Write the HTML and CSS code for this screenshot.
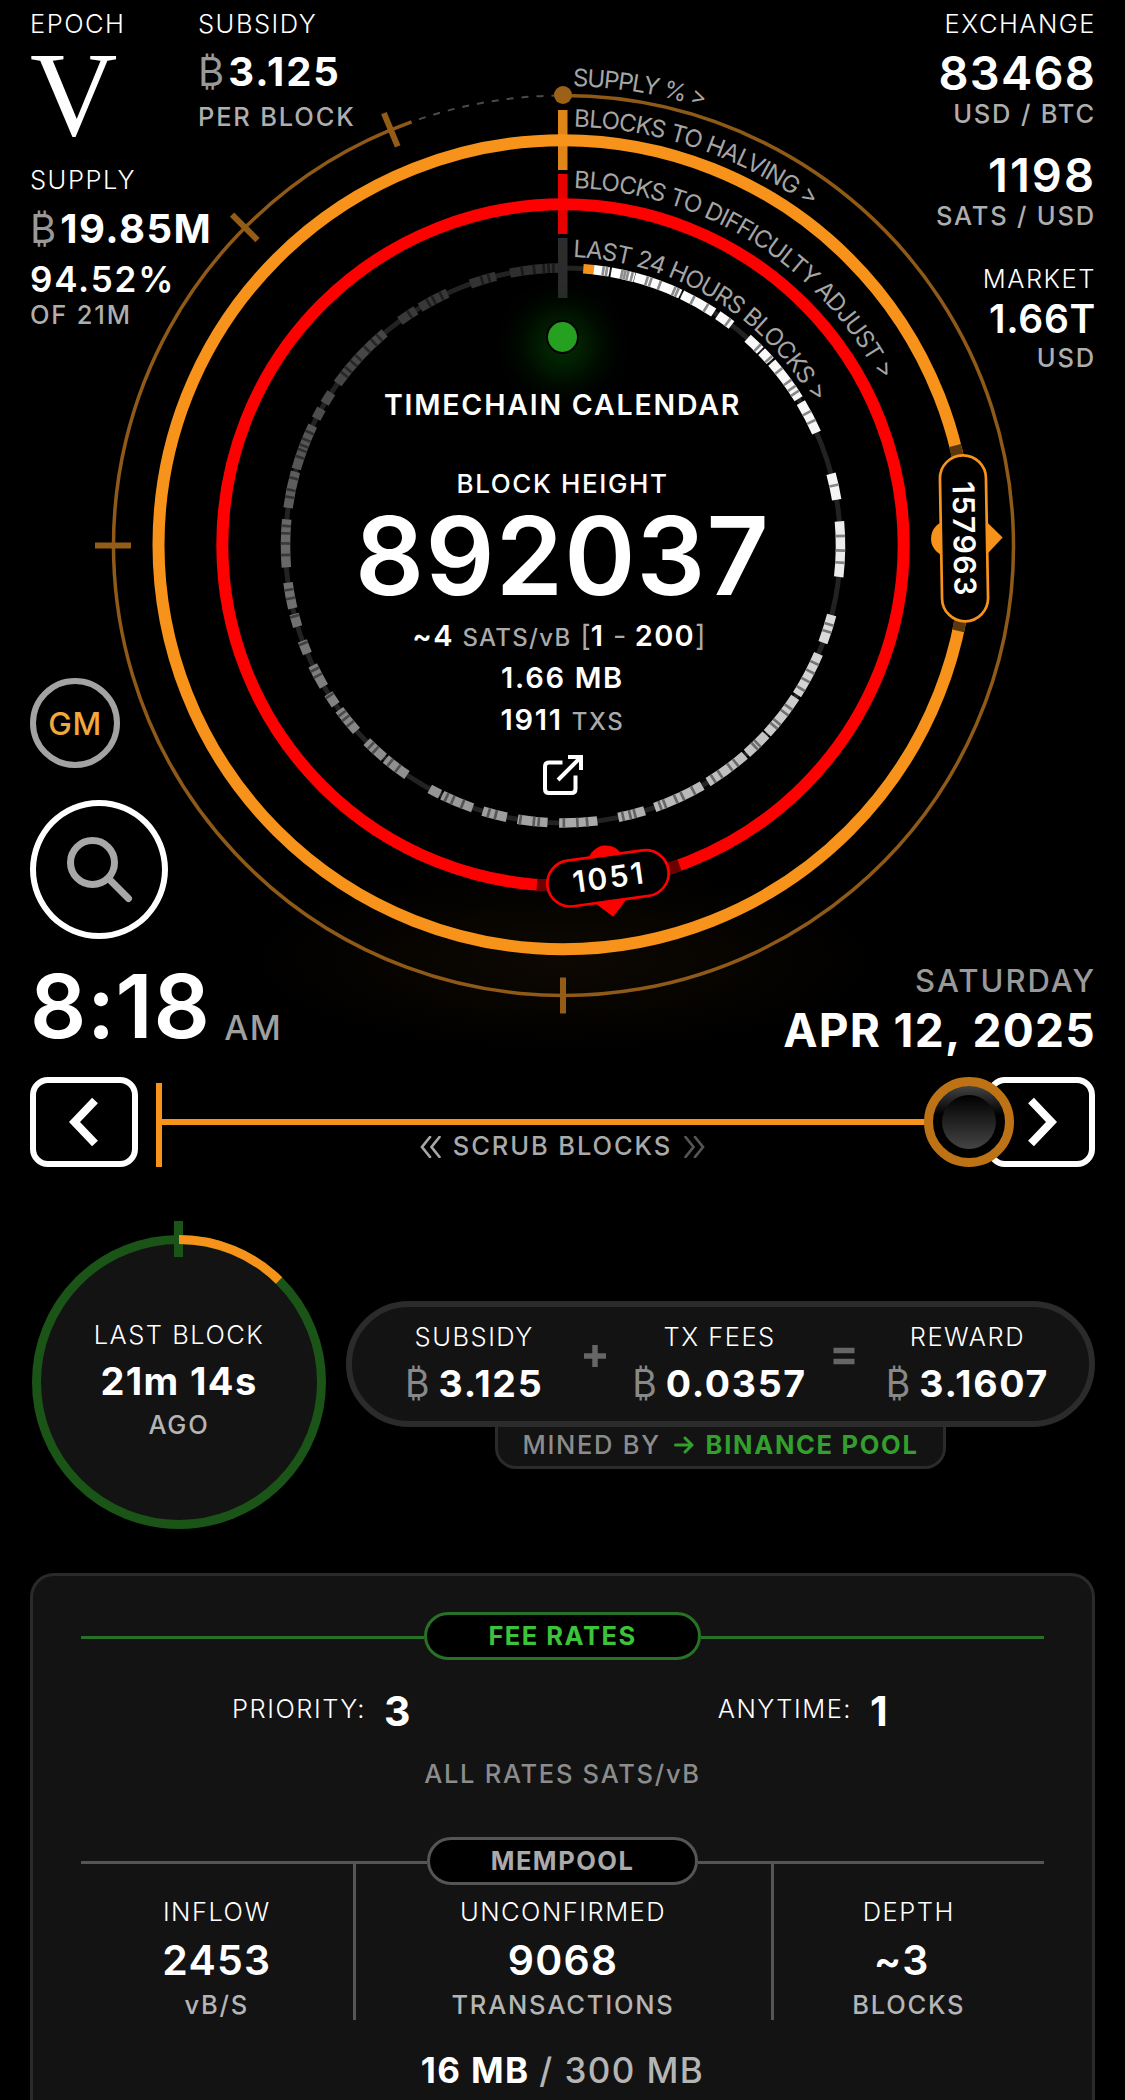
FILE: index.html
```html
<!DOCTYPE html>
<html lang="en">
<head>
    <meta charset="UTF-8">
    <meta name="viewport" content="width=device-width, initial-scale=1.0">
    <title>Timechain Calendar</title>
    <link rel="stylesheet" href="styles.css">
</head>
<body>

    <!-- Dial and corner stats -->
    <section class="hero">
        <svg class="dial" viewBox="0 0 1125 1056">
            <defs>
                <radialGradient id="floor-glow">
                    <stop offset="0" stop-color="#f7931a" stop-opacity="0.055"/>
                    <stop offset="1" stop-color="#f7931a" stop-opacity="0"/>
                </radialGradient>
                <path id="path-supply" d="M563 86 A459 459 0 0 1 1022 545"/>
                <path id="path-halving" d="M563 126.5 A418.5 418.5 0 0 1 981.5 545"/>
                <path id="path-difficulty" d="M563 188 A357 357 0 0 1 920 545"/>
                <path id="path-day" d="M563 257 A288 288 0 0 1 851 545"/>
            </defs>
            <ellipse cx="563" cy="960" rx="330" ry="95" fill="url(#floor-glow)"/>

            <!-- Supply ring -->
            <path class="ring supply" id="supply-arc"/>
            <g id="supply-ticks"></g>
            <circle cx="563" cy="95" r="9" fill="#9c6016"/>

            <!-- Halving ring -->
            <rect x="558" y="110" width="9.5" height="60" fill="#e08618"/>
            <circle class="ring halving" cx="563" cy="544.7" r="404.5"/>
            <path class="ring stub-halving" id="halving-stub"/>

            <!-- Difficulty ring -->
            <rect x="558" y="174" width="9.5" height="60" fill="#e60000"/>
            <circle class="ring difficulty" cx="563" cy="545" r="340.7"/>
            <path class="ring stub-difficulty" id="difficulty-stub"/>

            <!-- Last 24 hours ring -->
            <circle class="ring day" cx="563" cy="545.5" r="277.5"/>
            <g id="day-blocks"></g>
            <rect x="558" y="238" width="9.5" height="60" fill="#2c2c2c"/>

            <g class="ring-label">
                <text textLength="133"><textPath href="#path-supply" startOffset="10" textLength="133">SUPPLY % &gt;</textPath></text>
                <text textLength="254"><textPath href="#path-halving" startOffset="11" textLength="254">BLOCKS TO HALVING &gt;</textPath></text>
                <text textLength="379"><textPath href="#path-difficulty" startOffset="11" textLength="379">BLOCKS TO DIFFICULTY ADJUST &gt;</textPath></text>
                <text textLength="294"><textPath href="#path-day" startOffset="10" textLength="294">LAST 24 HOURS BLOCKS &gt;</textPath></text>
            </g>

            <g class="marker marker-halving" transform="translate(964 538.3) rotate(89)">
                <circle cy="15" r="18"/>
                <path d="M-19 -20 L0 -38.7 L19 -20 Z"/>
                <rect x="-83" y="-23" width="166" height="46" rx="23"/>
                <text y="10.5" textLength="114">157963</text>
            </g>
            <g class="marker marker-difficulty" transform="translate(608 878.3) rotate(-7.8)">
                <circle cy="-15" r="18"/>
                <path d="M-19 20 L0 38.7 L19 20 Z"/>
                <rect x="-61" y="-23" width="122" height="46" rx="23"/>
                <text y="10" textLength="71">1051</text>
            </g>
        </svg>

        <div class="block">
            <div class="status-dot"></div>
            <h1>TIMECHAIN CALENDAR</h1>
            <h2>BLOCK HEIGHT</h2>
            <p class="height">892037</p>
            <p class="detail fee-range">~4 <small>SATS/vB</small> <i>[</i>1 <i>-</i> 200<i>]</i></p>
            <p class="detail">1.66 MB</p>
            <p class="detail">1911 <small>TXS</small></p>
            <svg class="icon-open" viewBox="0 0 40 40">
                <path d="M19.5 7.500 H6 Q2 7.500 2 11.500 V34 Q2 38 6 38 H28.500 Q32.500 38 32.500 34 V20.500"/>
                <path d="M15 25 L37.500 2.500 M25 2 H38 V15"/>
            </svg>
        </div>

        <div class="overlay">
            <div class="corners">
                <div class="left">
                    <div class="pair">
                        <div class="epoch">
                            <p class="label">EPOCH</p>
                            <p class="numeral">V</p>
                        </div>
                        <div class="subsidy">
                            <p class="label">SUBSIDY</p>
                            <p class="value"><span class="btc">₿</span>3.125</p>
                            <p class="unit">PER BLOCK</p>
                        </div>
                    </div>
                    <div class="supply-stats">
                        <p class="label">SUPPLY</p>
                        <p class="value"><span class="btc">₿</span>19.85M</p>
                        <p class="percent">94.52%</p>
                        <p class="unit">OF 21M</p>
                    </div>
                </div>
                <div class="right">
                    <p class="label">EXCHANGE</p>
                    <p class="price">83468</p>
                    <p class="unit">USD / BTC</p>
                    <p class="price sats">1198</p>
                    <p class="unit">SATS / USD</p>
                    <p class="label market">MARKET</p>
                    <p class="cap">1.66T</p>
                    <p class="unit">USD</p>
                </div>
            </div>

            <div class="corners bottom">
                <div class="actions">
                    <button class="gm-btn">GM</button>
                    <button class="search-btn">
                        <svg viewBox="0 0 66 66">
                            <circle cx="25.500" cy="25.500" r="22"/>
                            <path d="M42 42 L61.500 61.500"/>
                        </svg>
                    </button>
                    <p class="time">8:18<span>AM</span></p>
                </div>
                <div class="date">
                    <p class="weekday">SATURDAY</p>
                    <p class="day-text">APR 12, 2025</p>
                </div>
            </div>
        </div>
    </section>

    <!-- Scrubber -->
    <section class="scrubber">
        <button class="step-btn">
            <svg viewBox="0 0 30 50"><path d="M26 3.500 L5.500 25 L26 46.500"/></svg>
        </button>
        <div class="track">
            <div class="track-line"></div>
            <p class="track-label">
                <svg viewBox="0 0 22 22"><path d="M10 1 L2 11 L10 21 M19.500 1 L11.500 11 L19.500 21"/></svg>
                <span>SCRUB BLOCKS</span>
                <svg class="dim" viewBox="0 0 22 22"><path d="M2.500 1 L10.500 11 L2.500 21 M12 1 L20 11 L12 21"/></svg>
            </p>
            <div class="knob"><div class="knob-inner"></div></div>
        </div>
        <button class="step-btn next">
            <svg viewBox="0 0 30 50"><path d="M4 3.500 L24.500 25 L4 46.500"/></svg>
        </button>
    </section>

    <!-- Last block and reward -->
    <section class="summary">
        <div class="last-block">
            <svg class="last-ring" viewBox="0 0 294 324">
                <circle cx="147" cy="177" r="142.500" fill="#131313" stroke="#1a5416" stroke-width="9"/>
                <rect x="142" y="16" width="9" height="36" fill="#1a5416"/>
                <path d="M147 34.500 A142.500 142.500 0 0 1 247.100 75.500" fill="none" stroke="#f7931a" stroke-width="9"/>
            </svg>
            <p class="label">LAST BLOCK</p>
            <p class="ago">21m 14s</p>
            <p class="unit">AGO</p>
        </div>
        <div class="reward">
            <div class="reward-pill">
                <div class="amount">
                    <p class="label">SUBSIDY</p>
                    <p class="sum"><span class="btc">₿</span>3.125</p>
                </div>
                <svg class="sign plus" viewBox="0 0 22 22"><path d="M11 0 V22 M0 11 H22"/></svg>
                <div class="amount">
                    <p class="label">TX FEES</p>
                    <p class="sum"><span class="btc">₿</span>0.0357</p>
                </div>
                <svg class="sign" viewBox="0 0 22 22"><path d="M0.500 5.500 H21.500 M0.500 16.500 H21.500"/></svg>
                <div class="amount">
                    <p class="label">REWARD</p>
                    <p class="sum"><span class="btc">₿</span>3.1607</p>
                </div>
            </div>
            <div class="mined">
                <span>MINED BY</span>
                <svg viewBox="0 0 20 18"><path d="M1.500 9 H18 M11 2 L18 9 L11 16"/></svg>
                <a href="#">BINANCE POOL</a>
            </div>
        </div>
    </section>

    <!-- Fees and mempool -->
    <section class="card">
        <div class="heading fees"><h3>FEE RATES</h3></div>
        <div class="rates">
            <p><span class="label">PRIORITY:</span><b>3</b></p>
            <p><span class="label">ANYTIME:</span><b>1</b></p>
        </div>
        <p class="note">ALL RATES SATS/vB</p>
        <div class="heading mempool"><h3>MEMPOOL</h3></div>
        <div class="columns">
            <div>
                <p class="label">INFLOW</p>
                <p class="count">2453</p>
                <p class="unit">vB/S</p>
            </div>
            <div>
                <p class="label">UNCONFIRMED</p>
                <p class="count">9068</p>
                <p class="unit">TRANSACTIONS</p>
            </div>
            <div>
                <p class="label">DEPTH</p>
                <p class="count depth">~3</p>
                <p class="unit">BLOCKS</p>
            </div>
        </div>
        <p class="memory">16 MB <span>/ 300 MB</span></p>
    </section>

    <script src="dial.js"></script>
</body>
</html>
```
FILE: styles.css
```css
* {
    margin: 0;
    padding: 0;
    box-sizing: border-box;
    font-family: Inter, "Liberation Sans", sans-serif;
}

body {
    background-color: #000;
    color: white;
    width: 1125px;
    height: 2100px;
    overflow: hidden;
}

button {
    background: none;
    cursor: pointer;
}

.label {
    font-size: 25.5px;
    font-weight: 300;
    line-height: 31px;
    letter-spacing: 1.5px;
}

.unit {
    font-size: 25.5px;
    font-weight: 500;
    line-height: 31px;
    letter-spacing: 1.8px;
    color: #aeaeae;
}

.btc {
    margin-right: 4px;
    font-weight: 400;
    letter-spacing: 0;
    color: #999;
}

/* Dial */
.hero {
    display: grid;
    height: 1056px;
}

.hero > * {
    grid-area: 1 / 1;
}

.dial {
    width: 1125px;
    height: 1056px;
}

.ring {
    fill: none;
}

.supply {
    stroke: #8f5a17;
    stroke-width: 3.5;
}

.supply-remaining {
    fill: none;
    stroke: #4a4a4a;
    stroke-width: 2;
    stroke-dasharray: 7 8;
}

.supply-tick {
    stroke: #935c17;
    stroke-width: 6;
}

.halving {
    stroke: #f7931a;
    stroke-width: 12;
}

.stub-halving {
    stroke: #5a370d;
    stroke-width: 12;
}

.difficulty {
    stroke: #f00;
    stroke-width: 12;
}

.stub-difficulty {
    stroke: #6b0000;
    stroke-width: 12;
}

.day {
    stroke: #222;
    stroke-width: 5;
}

.ring-label text {
    font-size: 24px;
    font-weight: 400;
    fill: #a5a5a5;
}

.marker rect {
    fill: #000;
    stroke-width: 2.7;
}

.marker text {
    font-size: 30px;
    font-weight: 600;
    text-anchor: middle;
    fill: white;
}

.marker-halving {
    fill: #f7931a;
}

.marker-halving rect {
    stroke: #f7931a;
}

.marker-difficulty {
    fill: #f00;
}

.marker-difficulty rect {
    stroke: #f00;
}

/* Block info in the middle of the dial */
.block {
    display: flex;
    flex-direction: column;
    align-items: center;
    padding-top: 322px;
}

.status-dot {
    width: 29px;
    height: 30px;
    border-radius: 50%;
    background-color: #26a021;
    box-shadow: 0 0 0 2px #000, 0 8px 36px 18px #033003;
}

.block h1 {
    margin-top: 35px;
    font-size: 28.5px;
    font-weight: 600;
    line-height: 36px;
    letter-spacing: 1.8px;
}

.block h2 {
    margin-top: 45px;
    font-size: 26px;
    font-weight: 500;
    line-height: 31px;
    letter-spacing: 1.6px;
}

.height {
    margin-top: 1px;
    font-size: 108px;
    font-weight: 600;
    line-height: 112px;
    letter-spacing: 1.2px;
}

.detail {
    font-size: 29px;
    font-weight: 600;
    line-height: 42px;
    letter-spacing: 1.7px;
}

.fee-range {
    margin-top: 3px;
    padding-right: 7px;
    letter-spacing: 1.3px;
}

.detail small {
    font-size: 24px;
    font-weight: 500;
    line-height: 1;
    color: #aaa;
}

.detail i {
    font-style: normal;
    font-weight: 400;
    letter-spacing: 0;
    color: #aaa;
}

.icon-open {
    margin-top: 14px;
    width: 40px;
    height: 40px;
    fill: none;
    stroke: white;
    stroke-width: 4;
}

/* Corner stats */
.overlay {
    display: flex;
    flex-direction: column;
    justify-content: space-between;
    padding: 8px 30px 0;
}

.corners {
    display: flex;
    justify-content: space-between;
}

.pair {
    display: flex;
    height: 156px;
}

.epoch {
    width: 168px;
}

.numeral {
    font-family: "Liberation Serif", serif;
    font-size: 121px;
    line-height: 111px;
}

.subsidy .value {
    margin-top: 8px;
    letter-spacing: 2px;
}

.subsidy .unit {
    margin-top: 4px;
}

.value {
    margin-top: 9px;
    font-size: 40px;
    font-weight: 700;
    line-height: 50px;
    letter-spacing: 1.5px;
}

.percent {
    margin-top: 5px;
    font-size: 35px;
    font-weight: 600;
    line-height: 40px;
    letter-spacing: 1.8px;
}

.right {
    margin-right: -1px;
    text-align: right;
}

.price {
    margin-top: 9px;
    font-size: 47px;
    font-weight: 600;
    line-height: 50px;
    letter-spacing: 1.2px;
}

.price.sats {
    margin-top: 21px;
    letter-spacing: 2px;
}

.market {
    margin-top: 32px;
}

.cap {
    margin-top: 2px;
    font-size: 39px;
    font-weight: 600;
    line-height: 46px;
    letter-spacing: 0.7px;
}

.bottom {
    align-items: flex-end;
}

.gm-btn {
    display: block;
    width: 90px;
    height: 90px;
    border: 6px solid #a3a3a3;
    border-radius: 50%;
    font-size: 31.5px;
    font-weight: 500;
    letter-spacing: 0.5px;
    color: #f2a93b;
}

.search-btn {
    display: flex;
    width: 138px;
    height: 139px;
    margin: 32px 0 22px;
    padding: 31px;
    border: 6px solid white;
    border-radius: 50%;
}

.search-btn svg {
    width: 66px;
    height: 66px;
    flex: none;
    fill: none;
    stroke: #a8a8a8;
    stroke-width: 7;
    stroke-linecap: round;
}

.time {
    margin-bottom: 5px;
    font-size: 88px;
    font-weight: 600;
    line-height: 90px;
    letter-spacing: 0.6px;
}

.time span {
    position: relative;
    top: 2px;
    margin-left: 14px;
    font-size: 34px;
    font-weight: 500;
    line-height: 1;
    letter-spacing: 1.2px;
    color: #a0a0a0;
}

.date {
    margin-right: -1px;
    text-align: right;
}

.weekday {
    font-size: 31px;
    font-weight: 500;
    line-height: 36px;
    letter-spacing: 2px;
    color: #999;
}

.day-text {
    margin-top: 5px;
    font-size: 46px;
    font-weight: 700;
    line-height: 52px;
    letter-spacing: 1.3px;
}

/* Scrubber */
.scrubber {
    display: flex;
    margin: 21px 30px 0;
    height: 90px;
}

.step-btn {
    width: 108px;
    height: 90px;
    border: 6px solid white;
    border-radius: 18px;
}

.step-btn svg {
    width: 30px;
    height: 50px;
    margin-top: 2px;
    fill: none;
    stroke: white;
    stroke-width: 8;
}

.step-btn.next {
    padding-left: 2px;
}

.track {
    position: relative;
    flex: 1;
    margin: 6px 0 0 18px;
    border-left: 6px solid #f7931a;
}

.track-line {
    height: 6px;
    margin-top: 36px;
    background-color: #f7931a;
}

.track-label {
    display: flex;
    justify-content: center;
    align-items: center;
    gap: 11px;
    margin-top: 5px;
    padding-right: 24px;
    font-size: 25.5px;
    font-weight: 500;
    line-height: 31px;
    letter-spacing: 1.9px;
    color: #aaa;
}

.track-label svg {
    width: 22px;
    height: 22px;
    margin-top: 3px;
    fill: none;
    stroke: #a6a6a6;
    stroke-width: 2.7;
    stroke-linecap: round;
}

.track-label .dim {
    stroke: #555;
}

.knob {
    position: absolute;
    top: -6px;
    right: -27px;
    width: 90px;
    height: 90px;
    padding: 9px;
    border: 9px solid #bd7315;
    border-radius: 50%;
    background: linear-gradient(#444, #000 40%);
}

.knob-inner {
    height: 54px;
    border-radius: 50%;
    background: linear-gradient(#000, #444);
}

/* Last block and reward */
.summary {
    display: flex;
    margin: 53px 30px 0 32px;
    height: 309px;
}

.last-block {
    position: relative;
    width: 294px;
    padding-top: 99px;
    text-align: center;
}

.last-block > p {
    position: relative;
}

.last-ring {
    position: absolute;
    left: 0;
    top: -15px;
    width: 294px;
    height: 324px;
}

.ago {
    margin: 9px 0 6px;
    font-size: 38px;
    font-weight: 700;
    line-height: 44px;
    letter-spacing: 1.4px;
}

.last-block .unit {
    color: #b5b5b5;
}

.reward {
    margin: 81px 0 0 20px;
    flex: 1;
}

.reward-pill {
    display: flex;
    justify-content: space-between;
    height: 126px;
    padding: 14px 40px 0 53px;
    border: 6px solid #2b2b2b;
    border-radius: 63px;
    background-color: #131313;
    text-align: center;
}

.sum {
    margin-top: 10px;
    font-size: 37.5px;
    font-weight: 700;
    line-height: 44px;
    letter-spacing: 1.7px;
}

.sum .btc {
    margin-right: 9px;
    color: #888;
}

.sign {
    width: 22px;
    height: 22px;
    margin-top: 24px;
    margin-right: 4px;
    stroke: #666;
    stroke-width: 5.5;
}

.plus {
    margin-left: 14px;
    margin-right: 0;
}

.mined {
    display: flex;
    align-items: center;
    justify-content: center;
    width: 451px;
    height: 42px;
    margin: 0 auto;
    padding-bottom: 4px;
    border: 3px solid #2b2b2b;
    border-top: none;
    border-radius: 0 0 21px 21px;
    background-color: #131313;
    font-size: 25.5px;
    font-weight: 500;
    line-height: 36px;
    letter-spacing: 1.7px;
    color: #8c8c8c;
}

.mined svg {
    width: 20px;
    height: 18px;
    margin: 0 12px 0 13px;
    fill: none;
    stroke: #339f2d;
    stroke-width: 3;
    stroke-linecap: round;
}

.mined a {
    font-weight: 700;
    color: #339f2d;
    text-decoration: none;
}

/* Fees and mempool */
.card {
    height: 527px;
    margin: 44px 30px 0;
    padding: 36px 48px 0;
    border: 3px solid #2a2a2a;
    border-bottom: none;
    border-radius: 24px 24px 0 0;
    background-color: #131313;
}

.heading {
    display: flex;
    align-items: center;
    color: #aaa;
}

.heading::before,
.heading::after {
    content: "";
    flex: 1;
    height: 3px;
    margin-top: 2px;
    background-color: #555;
}

.heading h3 {
    width: 271px;
    height: 48px;
    border: 3px solid #555;
    border-radius: 24px;
    background-color: #000;
    font-size: 25.5px;
    font-weight: 700;
    line-height: 42px;
    letter-spacing: 1.5px;
    text-align: center;
}

.fees {
    color: #3dc33a;
}

.fees::before,
.fees::after {
    background-color: #277226;
}

.fees h3 {
    width: 277px;
    border-color: #277226;
}

.rates {
    display: flex;
    margin-top: 29px;
    height: 44px;
}

.rates p {
    display: flex;
    justify-content: center;
    width: 50%;
    gap: 18px;
    padding-right: 1px;
    line-height: 44px;
}

.rates .label {
    line-height: 39px;
}

.rates b {
    font-size: 41px;
    font-weight: 700;
}

.note {
    margin-top: 25px;
    font-size: 25.5px;
    font-weight: 500;
    line-height: 31px;
    letter-spacing: 1.7px;
    text-align: center;
    color: #8c8c8c;
}

.mempool {
    margin-top: 48px;
}

.columns {
    display: grid;
    grid-template-columns: 274.5px 418px 1fr;
    height: 158px;
    margin-top: -24px;
    text-align: center;
}

.columns div {
    padding-top: 35px;
    border-right: 3px solid #555;
}

.columns div:last-child {
    border-right: none;
}

.columns .count {
    margin: 11px 0 6px;
    font-size: 41px;
    font-weight: 600;
    line-height: 45px;
    letter-spacing: 1.2px;
}

.columns .depth {
    padding-right: 14px;
}

.columns .unit {
    color: #b5b5b5;
}

.memory {
    margin-top: 29px;
    font-size: 35px;
    font-weight: 650;
    line-height: 44px;
    letter-spacing: 1.4px;
    text-align: center;
}

.memory span {
    font-weight: 500;
    color: #b5b5b5;
}
```
FILE: dial.js
```js
const NS = 'http://www.w3.org/2000/svg';

// Angles run clockwise from the top of the dial
function point(cx, cy, r, deg) {
    const a = (deg - 90) * Math.PI / 180;
    return (cx + r * Math.cos(a)).toFixed(2) + ' ' + (cy + r * Math.sin(a)).toFixed(2);
}

function arc(cx, cy, r, from, to) {
    const large = to - from > 180 ? 1 : 0;
    return `M${point(cx, cy, r, from)} A${r} ${r} 0 ${large} 1 ${point(cx, cy, r, to)}`;
}

function addPath(parent, d, attrs) {
    const p = document.createElementNS(NS, 'path');
    p.setAttribute('d', d);
    for (const key in attrs) p.setAttribute(key, attrs[key]);
    parent.appendChild(p);
}

// Mined supply and what is left
const supplyEnd = 94.52 * 3.6;
const ticks = document.getElementById('supply-ticks');
document.getElementById('supply-arc').setAttribute('d', arc(563.5, 545.5, 450, 0, supplyEnd));
addPath(ticks, arc(563.5, 545.5, 450, supplyEnd + 1, 359), { class: 'supply-remaining' });
[50, 75, 87.5, 93.75].forEach(pct => {
    const deg = pct * 3.6;
    addPath(ticks, `M${point(563, 545.5, 432, deg)} L${point(563, 545.5, 468, deg)}`, { class: 'supply-tick' });
});

document.getElementById('halving-stub').setAttribute('d', arc(563, 544.7, 404.5, 75.8, 102.3));
document.getElementById('difficulty-stub').setAttribute('d', arc(563, 545, 340.7, 160, 184.4));

// Blocks of the last 24 hours: [start, ...dividers, end]
const blocks = [
    [6.4, 8.3, 9, 9.6], [10, 12.2, 12.8, 13.4, 14.3, 14.9], [15, 17.5, 18.3, 20.3, 23.5, 24.2, 25],
    [25.4, 27.8, 31, 32.9], [33.9, 36.4, 37.4], [41.7, 44.5, 45.3], [45.7, 47.8, 48.3],
    [48.8, 51, 54, 55.5, 56.7, 58.1], [59, 61.5, 63.5, 66], [75, 77.5, 80.5],
    [85, 88, 91, 93.5, 96.5], [104.5, 106.5, 108, 110.5], [113, 115, 117, 119, 121, 122.5],
    [123.2, 125.6, 127, 129.5, 130.5, 132.6], [133, 135.5, 136.3, 138.5], [139.1, 141.5, 143, 145.5, 147.2, 148.5],
    [149.9, 152, 154.5, 156, 158.5, 159.5, 160.7], [162.9, 165, 166, 167.5, 168.5],
    [172.9, 175, 177, 179.8, 180.8], [183.2, 185, 186, 188.8, 189.4], [191.7, 194, 195.5, 196.8],
    [199, 201.2, 203.4, 204.8, 205.8], [206.3, 208.7], [214.2, 216.5, 218.5, 219.7],
    [220.2, 222.5, 223.8, 225], [228.1, 230, 231.5, 232.7, 233.7], [235, 237.2, 237.7],
    [239.5, 242, 243.4, 244.4], [247.1, 249.3, 249.9], [253, 255.2, 255.7], [256.9, 259, 260.8, 262.3],
    [265.5, 268, 270.4, 272.5, 274, 275.4], [277.8, 280, 281.5, 284, 285.4],
    [286, 288.5, 290, 291, 292.3, 294, 295.6], [297.2, 299.5], [300.8, 303.4],
    [305.7, 308, 309.3, 311, 312.5, 315, 317, 318.5, 320], [324, 326.4, 328],
    [329, 331, 332.2, 334, 335.4], [340.5, 343, 344.5, 346], [349, 351.5, 354, 356, 357, 358, 359.8]
];

function shade(deg) {
    const stops = [[0, 255], [75, 245], [120, 205], [180, 165], [225, 138], [270, 100], [315, 62], [360, 42]];
    for (let i = 1; i < stops.length; i++) {
        if (deg <= stops[i][0]) {
            const [a, v] = stops[i - 1];
            const [b, w] = stops[i];
            return v + (w - v) * (deg - a) / (b - a);
        }
    }
    return 42;
}

const day = document.getElementById('day-blocks');

function drawBlock(from, to, color) {
    addPath(day, arc(563, 545.5, 277.5, from, to), { fill: 'none', stroke: color, 'stroke-width': 9.5 });
}

drawBlock(4.2, 6.5, '#f7931a');
blocks.forEach(b => {
    const v = Math.round(shade(b[0]));
    const dark = Math.round(v * 0.55);
    drawBlock(b[0], b[b.length - 1], `rgb(${v},${v},${v})`);
    b.slice(1, -1).forEach(d => drawBlock(d - 0.25, d + 0.3, `rgb(${dark},${dark},${dark})`));
});
```
